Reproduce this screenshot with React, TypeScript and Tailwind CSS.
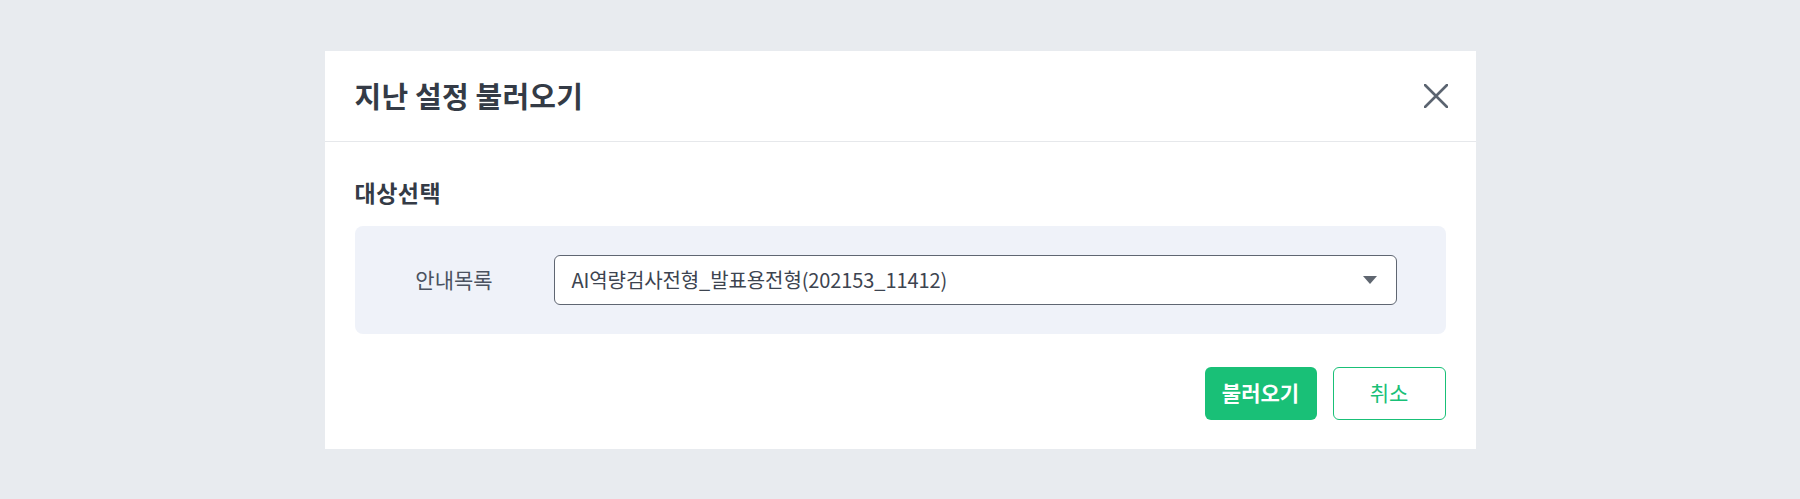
export default function App() {
    return (
        <div className="h-screen w-full bg-[#e8ebef] flex items-center justify-center font-['Noto_Sans_CJK_KR','Noto_Sans',sans-serif]">
            <div className="w-[1151px] bg-white">
                {/* Header */}
                <div className="h-[91px] border-b border-[#e6e8eb] flex items-center justify-between pl-[30px] pr-[28px]">
                    <h2 className="text-[29px] font-semibold text-[#343b46] tracking-[0.2px]">지난 설정 불러오기</h2>
                    <button className="w-[24px] h-[24px] flex items-center justify-center text-[#5b6470]">
                        <svg className="w-[24px] h-[24px]" viewBox="0 0 24 24" fill="none" stroke="currentColor" strokeWidth={2.6} strokeLinecap="round">
                            <path d="M1 1l22 22M23 1L1 23" />
                        </svg>
                    </button>
                </div>

                {/* Body */}
                <div className="px-[30px] pt-[35px] pb-[29px]">
                    <h3 className="text-[23px] leading-[31px] font-bold text-[#343b46] tracking-[0.5px]">대상선택</h3>

                    <div className="mt-[18px] h-[108px] rounded-[8px] bg-[#eff2f9] flex items-center pr-[49px]">
                        <div className="w-[199px] text-center text-[21px] text-[#4b5260]">안내목록</div>
                        <div className="flex-1 h-[50px] rounded-[6px] border border-[#5f6672] bg-white flex items-center justify-between pl-[17px] pr-[19px]">
                            <span className="text-[20px] text-[#3d4450] tracking-[-0.1px]">AI역량검사전형_발표용전형(202153_11412)</span>
                            <svg className="w-[14px] h-[8px] text-[#5f6670]" viewBox="0 0 14 8" fill="currentColor">
                                <path d="M0 0h14L7 8z" />
                            </svg>
                        </div>
                    </div>

                    <div className="mt-[33px] flex justify-end gap-[16px]">
                        <button className="w-[112px] h-[53px] rounded-[6px] bg-[#19c077] text-white text-[21px] font-bold">
                            불러오기
                        </button>
                        <button className="w-[113px] h-[53px] rounded-[6px] border-[1.5px] border-[#19c077] bg-white text-[#19c077] text-[21px]">
                            취소
                        </button>
                    </div>
                </div>
            </div>
        </div>
    );
}
